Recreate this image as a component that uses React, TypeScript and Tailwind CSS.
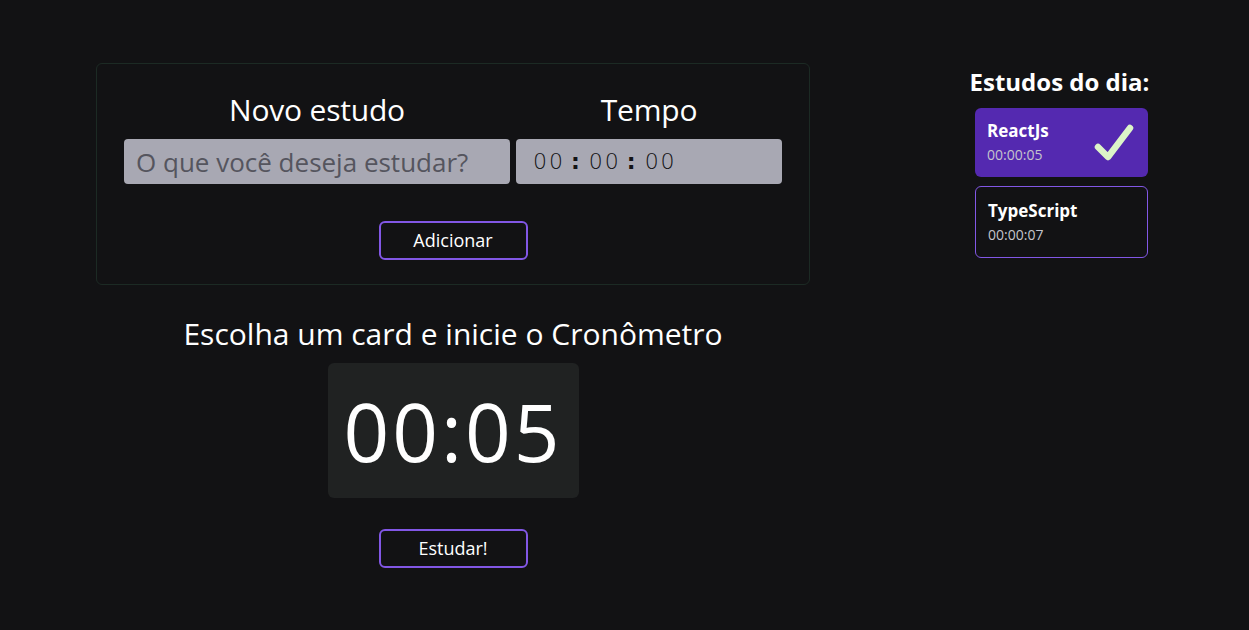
import React from "react";

const font = { fontFamily: '"Open Sans", "Noto Sans", sans-serif' };

export default function App() {
  return (
    <div className="min-h-[630px] w-full bg-[#121214] text-white" style={font}>
      <div className="flex pl-[96px] pt-[63px]">
        <div className="flex w-[714px] flex-col items-center">
          <form className="flex w-full flex-col items-center rounded-md border border-[#1c2a24] px-[27px] pb-[24px] pt-[26px]">
            <div className="grid w-full grid-cols-[386px_266px] gap-x-[6px]">
              <label className="mb-[9px] text-center text-[30px] leading-[40px] tracking-[-0.2px]">Novo estudo</label>
              <label className="mb-[9px] text-center text-[30px] leading-[40px] tracking-[-0.2px]">Tempo</label>
              <input
                readOnly
                placeholder="O que você deseja estudar?"
                className="h-[45px] rounded-[4px] bg-[#a8a8b3] px-[12px] text-[26px] text-[#121214] placeholder:text-[#55555e] outline-none"
                style={font}
              />
              <div
                className="flex h-[45px] items-center rounded-[4px] bg-[#a8a8b3] pl-[17px] text-[22px] text-[#121214]"
                style={{ fontFamily: '"DejaVu Sans", sans-serif', fontWeight: 300 }}
              >
                <span className="tracking-[2px]">00</span>
                <span className="ml-[6px] mr-[9px] font-bold">:</span>
                <span className="tracking-[2px]">00</span>
                <span className="ml-[6px] mr-[9px] font-bold">:</span>
                <span className="tracking-[2px]">00</span>
              </div>
            </div>
            <button
              type="button"
              className="mt-[37px] h-[39px] w-[149px] rounded-md border-2 border-[#8257e5] text-[18px]"
              style={font}
            >
              Adicionar
            </button>
          </form>
          <h2 className="mt-[29px] text-[30px] leading-[40px]">Escolha um card e inicie o Cronômetro</h2>
          <div className="mt-[9px] flex h-[135px] w-[251px] items-center justify-center rounded-md bg-[#202222]">
            <span className="text-[80px] leading-none tracking-[3px]">00:05</span>
          </div>
          <button
            type="button"
            className="mt-[31px] h-[39px] w-[149px] rounded-md border-2 border-[#8257e5] text-[18px]"
            style={font}
          >
            Estudar!
          </button>
        </div>
        <aside className="ml-[165px] mt-[3px] flex w-[173px] flex-col items-center">
          <h2 className="mr-[4px] whitespace-nowrap text-[24px] font-bold leading-[32px]">Estudos do dia:</h2>
          <ul className="mt-[10px] flex w-[173px] flex-col gap-[9px]">
            <li className="relative h-[69px] rounded-md bg-[#5429b0] px-[12px] pt-[12px]">
              <h3 className="text-[17px] font-bold leading-[22px]">ReactJs</h3>
              <span className="text-[14px] leading-[20px] text-[#c4c4cc]">00:00:05</span>
              <svg
                className="absolute right-[13px] top-[14px]"
                width="42"
                height="40"
                viewBox="0 0 42 40"
                fill="none"
              >
                <path
                  d="M5 25 L15 35 L37 6"
                  stroke="#dcf5c8"
                  strokeWidth="6.5"
                  strokeLinecap="round"
                  strokeLinejoin="round"
                />
              </svg>
            </li>
            <li className="h-[72px] rounded-md border border-[#8257e5] px-[12px] pt-[13px]">
              <h3 className="text-[17px] font-bold leading-[22px]">TypeScript</h3>
              <span className="text-[14px] leading-[20px] text-[#c4c4cc]">00:00:07</span>
            </li>
          </ul>
        </aside>
      </div>
    </div>
  );
}
